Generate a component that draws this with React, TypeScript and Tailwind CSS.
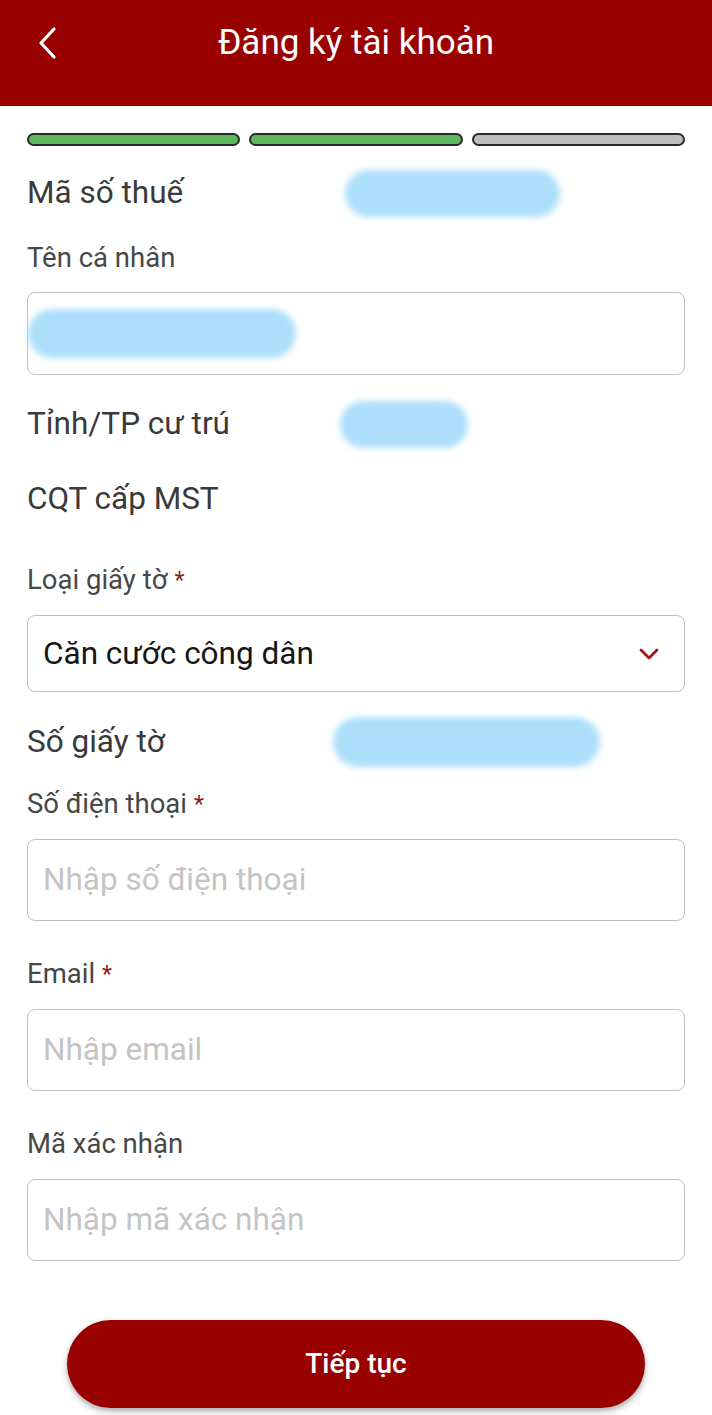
import React from 'react';

const font = { fontFamily: 'Roboto, "Noto Sans", sans-serif' };

function Blob({ className }: { className: string }) {
  return <div className={`rounded-full bg-[#addffa] blur-[3px] ${className}`} />;
}

function InfoRow({ label, children, className = '' }: { label: string; children?: React.ReactNode; className?: string }) {
  return (
    <div className={`flex h-[50px] items-center ${className}`}>
      <div className="w-[306px] shrink-0 text-[31.5px] leading-none text-[#3a3a3a]">{label}</div>
      {children}
    </div>
  );
}

function Label({ text, required, className = '' }: { text: string; required?: boolean; className?: string }) {
  return (
    <div className={`flex h-[36px] items-center text-[27.5px] leading-none text-[#474747] ${className}`}>
      {text}
      {required && <span className="ml-[7px] text-[23px] text-[#8a1c1c]">*</span>}
    </div>
  );
}

function Field({ placeholder, className = '' }: { placeholder: string; className?: string }) {
  return (
    <div className={`mt-[17px] flex h-[82px] items-center rounded-[8px] border-[1.5px] border-[#c2c2c2] px-[15px] ${className}`}>
      <span className="text-[31.5px] leading-none text-[#c4c4c4]">{placeholder}</span>
    </div>
  );
}

export default function App() {
  return (
    <div className="min-h-screen bg-white" style={font}>
      <header className="h-[106px] bg-[#990000]">
        <div className="relative flex h-[86px] items-center justify-center">
          <button className="absolute left-[34px] top-[26px]">
            <svg width="28" height="34" viewBox="0 0 28 34" fill="none">
              <polyline points="20,3 7,17 20,31" stroke="white" strokeWidth="3.2" strokeLinecap="round" strokeLinejoin="round" />
            </svg>
          </button>
          <h1 className="text-[35px] font-normal text-white">Đăng ký tài khoản</h1>
        </div>
      </header>

      <main className="px-[27px]">
        <div className="mt-[27px] flex gap-[9px]">
          <div className="h-[13px] flex-1 rounded-full border-2 border-[#2a2a2a] bg-[#5cb85c]" />
          <div className="h-[13px] flex-1 rounded-full border-2 border-[#2a2a2a] bg-[#5cb85c]" />
          <div className="h-[13px] flex-1 rounded-full border-2 border-[#2a2a2a] bg-[#bdbdbd]" />
        </div>

        <InfoRow label="Mã số thuế" className="mt-[22px]">
          <Blob className="ml-[12px] h-[47px] w-[215px]" />
        </InfoRow>

        <Label text="Tên cá nhân" className="mt-[22px]" />
        <div className="mt-[16px] flex h-[83px] items-center rounded-[8px] border-[1.5px] border-[#c2c2c2]">
          <Blob className="h-[49px] w-[268px]" />
        </div>

        <InfoRow label="Tỉnh/TP cư trú" className="mt-[24px]">
          <Blob className="ml-[7px] h-[47px] w-[128px]" />
        </InfoRow>

        <InfoRow label="CQT cấp MST" className="mt-[25px]" />

        <Label text="Loại giấy tờ" required className="mt-[38px]" />
        <div className="mt-[17px] flex h-[77px] items-center justify-between rounded-[8px] border-[1.5px] border-[#c2c2c2] pl-[15px] pr-[24px]">
          <span className="text-[31.5px] leading-none text-[#161616]">Căn cước công dân</span>
          <svg width="22" height="14" viewBox="0 0 22 14" fill="none">
            <polyline points="3,3 11,11 19,3" stroke="#a31515" strokeWidth="2.8" strokeLinecap="round" strokeLinejoin="round" />
          </svg>
        </div>

        <InfoRow label="Số giấy tờ" className="mt-[25px]">
          <Blob className="h-[50px] w-[267px]" />
        </InfoRow>

        <Label text="Số điện thoại" required className="mt-[19px]" />
        <Field placeholder="Nhập số điện thoại" />

        <Label text="Email" required className="mt-[35px]" />
        <Field placeholder="Nhập email" />

        <Label text="Mã xác nhận" className="mt-[35px]" />
        <Field placeholder="Nhập mã xác nhận" />

        <button className="mx-auto mt-[59px] flex h-[88px] w-[578px] items-center justify-center rounded-full bg-[#990000] shadow-[0_3px_6px_rgba(0,0,0,0.35)]">
          <span className="text-[28px] font-medium text-white">Tiếp tục</span>
        </button>
      </main>
    </div>
  );
}
